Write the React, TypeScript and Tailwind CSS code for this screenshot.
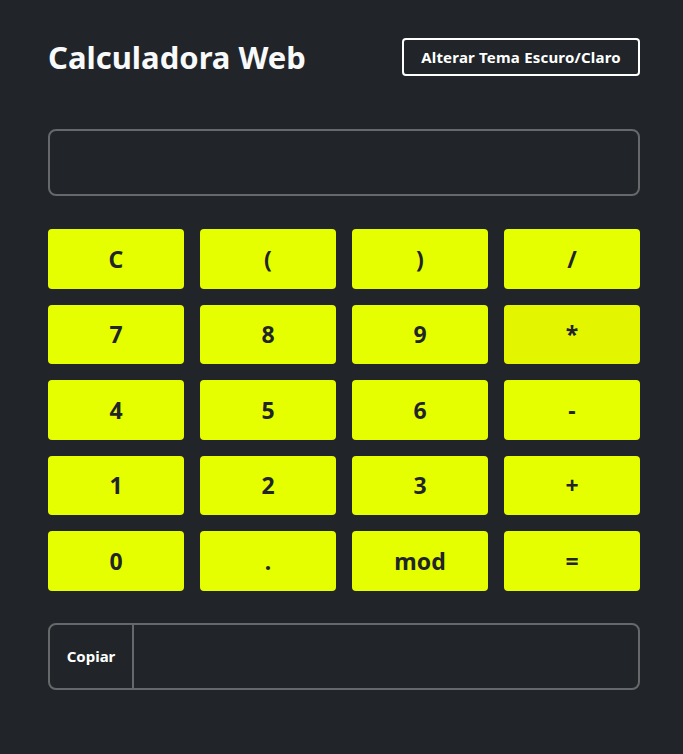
import React from 'react';

const keys = [
  'C', '(', ')', '/',
  '7', '8', '9', '*',
  '4', '5', '6', '-',
  '1', '2', '3', '+',
  '0', '.', 'mod', '=',
];

export default function App() {
  return (
    <div
      className="min-h-[754px] w-full bg-[#212529] text-white"
      style={{ fontFamily: '"Noto Sans", "Open Sans", sans-serif' }}
    >
      <div className="ml-[48px] w-[592px] pt-[38px]">
        <header className="flex h-[38px] items-center justify-between">
          <h1 className="text-[31px] font-bold text-[#f8f9fa]">Calculadora Web</h1>
          <button className="h-[38px] w-[238px] rounded-[4px] border-2 border-white text-[15px] font-bold tracking-[0.2px] text-white">
            Alterar Tema Escuro/Claro
          </button>
        </header>

        <div className="mt-[53px] h-[67px] rounded-[8px] border-2 border-[#66686b]" />

        <div className="mt-[33px] grid grid-cols-4 gap-x-4 gap-y-[16px]">
          {keys.map((k) => (
            <button
              key={k}
              className={`h-[59.5px] rounded-[4px] text-[23px] font-bold text-[#212529] ${
                k === '*' ? 'bg-[#e3f600]' : 'bg-[#e6ff00]'
              }`}
            >
              {k}
            </button>
          ))}
        </div>

        <div className="mt-[32px] flex h-[67px] rounded-[8px] border-2 border-[#66686b]">
          <div className="flex w-[84px] items-center justify-center border-r-2 border-[#66686b] text-[15px] font-bold text-white">
            Copiar
          </div>
          <div className="flex-1" />
        </div>
      </div>
    </div>
  );
}
